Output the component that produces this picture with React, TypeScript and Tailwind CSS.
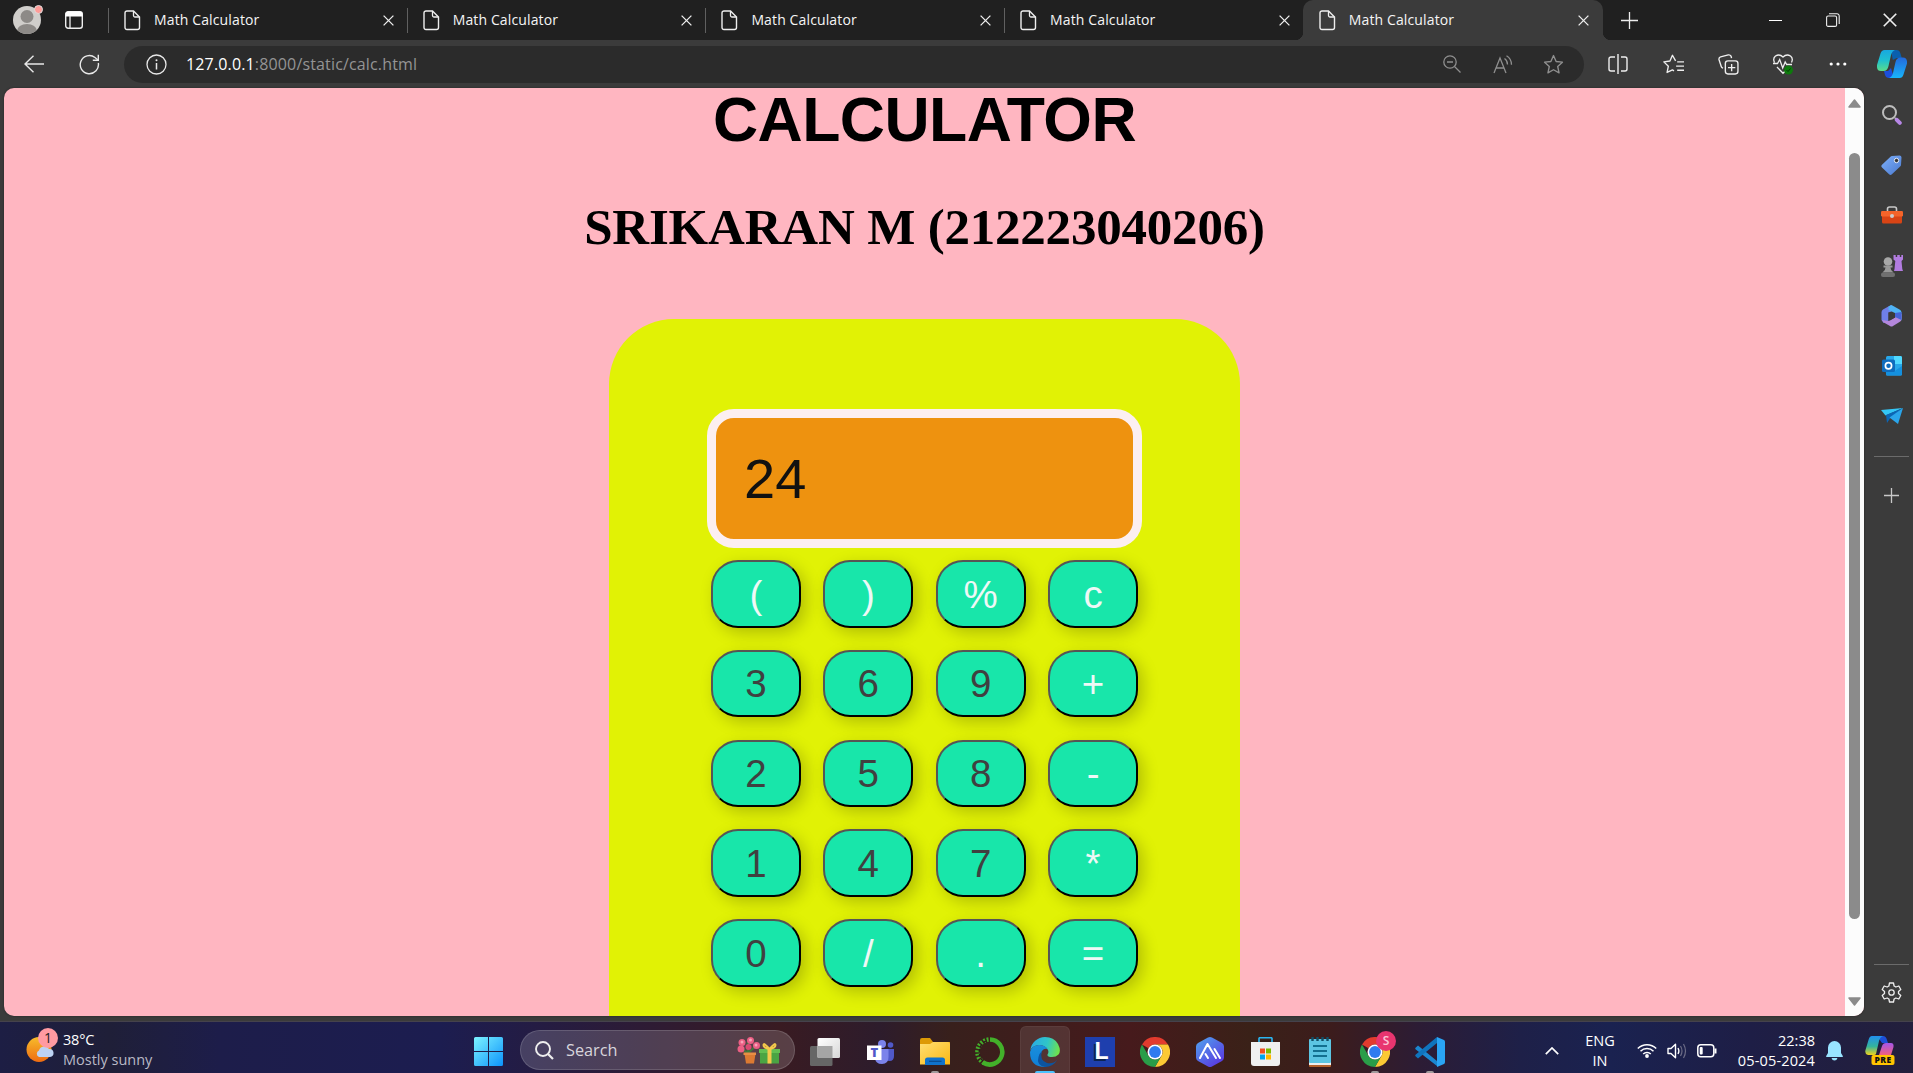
import React from "react";

const UI = "font-['Open_Sans','Noto_Sans',sans-serif]";

type SvgProps = { w: number; h?: number; vb: string; children: React.ReactNode; className?: string };
const Svg = ({ w, h, vb, children, className = "" }: SvgProps) => (
  <svg width={w} height={h ?? w} viewBox={vb} fill="none" className={"shrink-0 block " + className}>
    {children}
  </svg>
);

const Cross = ({ size = 11 }: { size?: number }) => (
  <Svg w={size} vb="0 0 11 11">
    <path d="M.6.6l9.8 9.8M10.4.6L.6 10.4" stroke="#eee" strokeWidth="1.3" />
  </Svg>
);

const PageIcon = () => (
  <Svg w={17} h={21} vb="0 0 17 21">
    <path d="M3 1h6.500l6 6v10.500a2 2 0 0 1-2 2H3a2 2 0 0 1-2-2V3a2 2 0 0 1 2-2z" stroke="#eee" strokeWidth="1.4" />
    <path d="M9.500 1v4.500a1.500 1.500 0 0 0 1.500 1.500h4.500" stroke="#eee" strokeWidth="1.3" />
  </Svg>
);

const Tab = ({ active = false }: { active?: boolean }) => (
  <div
    className={
      active
        ? "relative flex h-10 w-[300px] items-center rounded-t-[10px] bg-[#3b3b3b] pl-4 pr-[14px]"
        : "relative flex h-10 w-[298.700px] items-center pl-4 pr-[13px]"
    }
  >
    {!active && <span className="absolute left-0 top-2 h-[25px] w-px bg-[#606060]" />}
    {active && (
      <>
        <span className="absolute -left-2 bottom-0 size-2 bg-[radial-gradient(circle_at_0_0,#202020_8px,#3b3b3b_8.500px)]" />
        <span className="absolute -right-2 bottom-0 size-2 bg-[radial-gradient(circle_at_100%_0,#202020_8px,#3b3b3b_8.500px)]" />
      </>
    )}
    <PageIcon />
    <span className="ml-[13px] flex-1 whitespace-nowrap text-[14px] leading-10 tracking-[0.13px] text-[#f5f5f5]">Math Calculator</span>
    <Cross />
  </div>
);

const TabStrip = () => (
  <div className="flex h-10 shrink-0 bg-[#202020]">
    <div className="flex w-[108px] items-center pl-[13px]">
      <div className="relative">
        <Svg w={28} vb="0 0 28 28">
          <clipPath id="av"><circle cx="14" cy="14" r="14" /></clipPath>
          <g clipPath="url(#av)">
            <rect width="28" height="28" fill="#d0cecb" />
            <circle cx="14" cy="10.500" r="6.500" fill="#8d8a87" />
            <ellipse cx="14" cy="25" rx="10" ry="7" fill="#8d8a87" />
          </g>
        </Svg>
        <span className="absolute -right-[2px] -top-[1px] size-[9px] rounded-full border border-[#ddd] bg-[#ff9c98]" />
      </div>
      <Svg w={18} vb="0 0 18 18" className="ml-6">
        <rect x=".7" y=".7" width="16.600" height="16.600" rx="2.500" stroke="#eee" strokeWidth="1.400" />
        <path d="M.5 5.500V3A2.500 2.500 0 0 1 3 .5h12A2.500 2.500 0 0 1 17.500 3v2.500z" fill="#fff" />
        <path d="M5 5v12" stroke="#eee" strokeWidth="1.300" />
      </Svg>
    </div>
    <Tab /><Tab /><Tab /><Tab /><Tab active />
    <div className="flex flex-1 items-center pl-[18px]">
      <Svg w={17} vb="0 0 17 17"><path d="M8.500 0v17M0 8.500h17" stroke="#eee" strokeWidth="1.300" /></Svg>
    </div>
    <div className="flex w-[166px] items-center justify-between pl-[22px] pr-[16px]">
      <Svg w={13} vb="0 0 13 13"><path d="M0 6.500h13" stroke="#fff" /></Svg>
      <Svg w={14} vb="0 0 14 14">
        <rect x=".6" y="3" width="10" height="10.400" rx="1.500" stroke="#eee" strokeWidth="1.100" />
        <path d="M3 .8h8a2.200 2.200 0 0 1 2.200 2.200v8" stroke="#eee" strokeWidth="1.100" />
      </Svg>
      <Cross size={14} />
    </div>
  </div>
);

const Cell = ({ w, children }: { w: string; children: React.ReactNode }) => (
  <div className={"flex shrink-0 items-center justify-center " + w}>{children}</div>
);

const STAR = "M10 1.500l2.500 5.600 6 .7-4.500 4.100 1.300 6.100L10 15l-5.300 3 1.300-6.100L1.500 7.800l6-.7z";

const Toolbar = () => (
  <div className="flex h-12 shrink-0 items-center bg-[#3b3b3b]">
    <Cell w="w-[68px]">
      <Svg w={20} h={18} vb="0 0 20 18"><path d="M20 9H1M9.500.7L1 9l8.500 8.300" stroke="#e8e8e8" strokeWidth="1.400" /></Svg>
    </Cell>
    <Cell w="w-[42px]">
      <Svg w={21} vb="0 0 21 21">
        <path d="M19.300 9A9.100 9.100 0 1 1 16 3.500l3 2.500" stroke="#e8e8e8" strokeWidth="1.400" />
        <path d="M19.300.8v5.400h-5.500" stroke="#e8e8e8" strokeWidth="1.400" />
      </Svg>
    </Cell>
    <div className="ml-[14px] flex h-[37px] w-[1460px] shrink-0 items-center rounded-full bg-[#2b2b2b] pl-[22px]">
      <Svg w={21} vb="0 0 21 21">
        <circle cx="10.500" cy="10.500" r="9.500" stroke="#e8e8e8" strokeWidth="1.300" />
        <path d="M10.500 9v6.500" stroke="#e8e8e8" strokeWidth="1.500" /><circle cx="10.500" cy="6.300" r="1" fill="#e8e8e8" />
      </Svg>
      <span className="ml-[19px] flex-1 whitespace-nowrap text-[16px] leading-[36px] tracking-[0.15px] text-[#949494]">
        <span className="text-white">127.0.0.1</span>:8000/static/calc.html
      </span>
      <Cell w="w-[50px]">
        <Svg w={18} vb="0 0 18 18">
          <circle cx="7" cy="7" r="6.200" stroke="#8f8f8f" strokeWidth="1.300" /><path d="M4 7h6M11.500 11.500l6 6" stroke="#8f8f8f" strokeWidth="1.300" />
        </Svg>
      </Cell>
      <Cell w="w-[52px]">
        <Svg w={20} h={19} vb="0 0 20 19">
          <path d="M1 18L7 3l6 15M3.200 13h7.700M11.500 3.500q3 2 3 6M13.500.8q5 3 5 9" stroke="#8f8f8f" strokeWidth="1.300" />
        </Svg>
      </Cell>
      <Cell w="w-[49px]"><Svg w={21} vb="0 0 20 20"><path d={STAR} stroke="#8f8f8f" strokeWidth="1.300" strokeLinejoin="round" /></Svg></Cell>
      <div className="w-[6px]" />
    </div>
    <div className="w-[6px]" />
    <Cell w="w-[55px]">
      <Svg w={20} vb="0 0 20 20">
        <path d="M7 3H3a2 2 0 0 0-2 2v10a2 2 0 0 0 2 2h4M13 3h4a2 2 0 0 1 2 2v10a2 2 0 0 1-2 2h-4M10 0v20" stroke="#eee" strokeWidth="1.400" />
      </Svg>
    </Cell>
    <Cell w="w-[56px]">
      <Svg w={21} vb="0 0 20 20">
        <path d="M12 6.500L9 1.200 6.600 6.700l-5.800.8 4.300 4.100-1.200 6L9 15.200l1.500.8M13.500 7.500H20M12.500 11.500H20M13.500 15.500H20" stroke="#eee" strokeWidth="1.300" strokeLinejoin="round" />
      </Svg>
    </Cell>
    <Cell w="w-[54px]">
      <Svg w={21} vb="0 0 20 20">
        <rect x="7" y="6.500" width="12" height="12.500" rx="2.500" stroke="#eee" strokeWidth="1.300" />
        <path d="M13 9.500v7M9.500 13h7M4.800 13.500a2.500 2.500 0 0 1-1.800-1.800L1 5.500a2.300 2.300 0 0 1 1.500-2.700L9.800.9a2.300 2.300 0 0 1 2.800 1.700l.3 1.300" stroke="#eee" strokeWidth="1.300" />
      </Svg>
    </Cell>
    <Cell w="w-[55px]">
      <Svg w={22} vb="0 0 22 22">
        <path d="M2.500 9.500Q.5 5.500 3.500 3 7.500.5 11 4q3.500-3.500 7.500-1 3 2.500 1 6.500M5 14l6 6.300 2-2M1 10.500h4.500l2.200-4 3 8.500 2.500-6 1.500 2.500H20" stroke="#eee" strokeWidth="1.300" />
        <circle cx="16.500" cy="17" r="4.500" fill="#0e7a0d" /><path d="M14.500 17l1.500 1.500 2.500-3" stroke="#043b04" />
      </Svg>
    </Cell>
    <Cell w="w-[55px]">
      <Svg w={18} h={4} vb="0 0 18 4"><circle cx="2.200" cy="2" r="1.600" fill="#fff" /><circle cx="9" cy="2" r="1.600" fill="#fff" /><circle cx="15.800" cy="2" r="1.600" fill="#fff" /></Svg>
    </Cell>
    <div className="flex flex-1 items-center pl-[12px]">
      <Svg w={30} h={28} vb="0 0 30 28">
        <defs>
          <linearGradient id="cp1" x1="0" y1="0" x2="0" y2="1"><stop stopColor="#18a8e0" /><stop offset=".5" stopColor="#1fc0cf" /><stop offset="1" stopColor="#5bdd8a" /></linearGradient>
          <linearGradient id="cp2" x1="0" y1="0" x2="0" y2="1"><stop stopColor="#2469dc" /><stop offset="1" stopColor="#18b5fb" /></linearGradient>
        </defs>
        <path d="M14 0h5.500a4 4 0 0 1 3.800 3l1.500 5h-5l-4 2z" fill="#0a5fae" />
        <path d="M7.500 0H18q-3 1-4 5l-2.500 11q-1 5-5 5H4q-4.500 0-4-6L3.500 3.500Q4.500 0 7.500 0z" fill="url(#cp1)" />
        <path d="M7 21h4l3-3 3 10h-5q-3 0-4-3z" fill="#1c4fdc" />
        <path d="M22.500 28H12q3-1 4-5l2.500-11q1-4.500 5-4.500H26q4.500 0 4 6l-3.500 11Q25.500 28 22.500 28z" fill="url(#cp2)" />
      </Svg>
    </div>
  </div>
);

const KEYS = ["(", ")", "%", "c", "3", "6", "9", "+", "2", "5", "8", "-", "1", "4", "7", "*", "0", "/", ".", "="];

const Calculator = () => (
  <div className="mt-[57px] flex h-[760px] w-[631px] shrink-0 flex-col items-center rounded-[65px] bg-[#e1f205] pt-[90px]">
    <div className="flex h-[139px] w-[435px] shrink-0 items-center rounded-[27px] border-[9px] border-[#fceff0] bg-[#ee920f] pl-[28px] text-[56px] leading-none text-[#111]">
      24
    </div>
    <div className="mt-3 grid grid-cols-[repeat(4,90px)] gap-x-[22.400px] gap-y-[22.300px]">
      {KEYS.map((k) => (
        <button
          key={k}
          className={
            "flex h-[67.500px] w-[90px] items-center justify-center rounded-[27px] border-2 border-b-black border-l-[#555] border-r-black border-t-[#555] bg-[#18e6aa] pt-[2px] text-[38.500px] leading-none shadow-[5px_5px_16px_rgba(0,0,0,0.21)] " +
            (/[0-9]/.test(k) ? "text-[#404040]" : "text-[#eef8f6]")
          }
        >
          {k}
        </button>
      ))}
    </div>
  </div>
);

const Page = () => (
  <div className="flex h-[928px] w-[1860px] shrink-0 overflow-hidden rounded-[10px] bg-[#ffb6c1] shadow-[0_0_2px_#222]">
    <div className="flex w-[1841px] flex-col items-center overflow-hidden font-['Liberation_Sans',Arial,sans-serif] text-black">
      <h1 className="shrink-0 whitespace-nowrap text-[62.500px] font-bold leading-[62px] tracking-[-0.5px]">CALCULATOR</h1>
      <h2 className="mt-[43px] shrink-0 whitespace-nowrap font-['Liberation_Serif',serif] text-[51px] font-bold leading-[69px] tracking-[-0.2px]">SRIKARAN M (212223040206)</h2>
      <Calculator />
    </div>
    <div className="flex w-[19px] flex-col items-center bg-[#fcfcfc] pt-[11px]">
      <Svg w={13} h={9} vb="0 0 13 9"><path d="M6.500 1L12 8H1z" fill="#8b8b8b" stroke="#8b8b8b" strokeWidth="1.500" strokeLinejoin="round" /></Svg>
      <div className="mt-[45px] h-[766px] w-[11px] shrink-0 rounded-full bg-[#8b8b8b]" />
      <Svg w={13} h={9} vb="0 0 13 9" className="mt-[78px]"><path d="M6.500 8L12 1H1z" fill="#8b8b8b" stroke="#8b8b8b" strokeWidth="1.500" strokeLinejoin="round" /></Svg>
    </div>
  </div>
);

const SideCell = ({ children }: { children: React.ReactNode }) => (
  <div className="flex h-[50.200px] shrink-0 items-center justify-center">{children}</div>
);

const Sidebar = () => (
  <div className="flex flex-1 flex-col pl-[6px] pt-[2px]">
    <SideCell>
      <Svg w={20} vb="0 0 20 20"><path d="M13 13l1.500 1.500" stroke="#bdbdbd" strokeWidth="2" /><path d="M14.800 14.800l3 3" stroke="#b787e6" strokeWidth="4" strokeLinecap="round" /><circle cx="7.500" cy="7.500" r="6.500" stroke="#bdbdbd" strokeWidth="2" /></Svg>
    </SideCell>
    <SideCell>
      <Svg w={21} vb="0 0 21 21">
        <defs><linearGradient id="tg" x1="0" y1="0" x2="1" y2="1"><stop stopColor="#7eb0fa" /><stop offset="1" stopColor="#4a79cf" /></linearGradient></defs>
        <path d="M11 1l7.500-.5a2 2 0 0 1 2 2L20 10a2 2 0 0 1-.6 1.300l-8.500 8a2 2 0 0 1-2.800 0L1 12.500a2 2 0 0 1 0-2.800l8.500-8A2 2 0 0 1 11 1z" fill="url(#tg)" />
        <circle cx="15.500" cy="5.500" r="2.200" fill="#333" stroke="#e7eefc" />
      </Svg>
    </SideCell>
    <SideCell>
      <Svg w={22} h={18} vb="0 0 22 18">
        <path d="M6.500 5V3A2 2 0 0 1 8.500 1h5a2 2 0 0 1 2 2v2" stroke="#c9c9c9" strokeWidth="1.600" />
        <rect x="1" y="8" width="20" height="9.500" rx="1.500" fill="#d84415" /><rect y="5" width="22" height="5.500" rx="1.200" fill="#f4642a" />
        <circle cx="11" cy="10" r="2" fill="#ccc" />
      </Svg>
    </SideCell>
    <SideCell>
      <Svg w={22} vb="0 0 22 22">
        <path d="M12.500 0h2.200v2h1.500V0h2.600v2h1.500V0H22v4.500l-1.500 1.500.8 8 .7 2h-9l.5-2 .8-8-1.800-1.500z" fill="#b27ce0" />
        <circle cx="7" cy="6.500" r="4.300" fill="#a8a8a8" /><path d="M2.500 10.500h9v2h-2q0 3 3 5h-11q3-2 3-5h-2z" fill="#999" /><rect y="17.500" width="14" height="4.500" rx="2" fill="#707070" />
      </Svg>
    </SideCell>
    <SideCell>
      <Svg w={21} h={22} vb="0 0 21 22">
        <path d="M10 0L2 4.500Q.5 5.500.5 7.500v7.500l2 3 5-2.500V8L12 5.500z" fill="#6f7fe8" />
        <path d="M7.500 1.500L10.500 0l8 4.500q2 1 2 3v8L14 12V8L7.500 5z" fill="#4fb3f5" />
        <path d="M.8 15l2 2.500L9 21q1.500 1 3 0l6.500-4q2-1 2-4V9L14 12.500 7.500 16z" fill="#b487dc" />
        <path d="M14 8l6.500-1v8L14 12z" fill="#4664d8" />
        <path d="M7.500 7l6.500 1.500v4L9 15.500l-1.500-.5z" fill="#3b3b3b" />
      </Svg>
    </SideCell>
    <SideCell>
      <Svg w={20} vb="0 0 20 20">
        <rect x="4" width="16" height="19.500" rx="1.500" fill="#28a8ea" /><path d="M12 0h6.500A1.500 1.500 0 0 1 20 1.500V8h-8z" fill="#50d9ff" />
        <path d="M3 12l9 3.500L20 10v8a1.500 1.500 0 0 1-1.500 1.500h-14z" fill="#1490df" /><rect y="3.500" width="13" height="12.500" rx="1.500" fill="#0f6cbd" />
        <circle cx="6.500" cy="9.700" r="3.100" stroke="#fff" strokeWidth="1.700" />
      </Svg>
    </SideCell>
    <SideCell>
      <Svg w={22} h={16} vb="0 0 22 16"><path d="M0 2L22 0 4.500 7.500z" fill="#34c7f6" /><path d="M22 0L5 7l1 8 3-4.500z" fill="#0b66b5" /><path d="M22 0L8.500 9.500 17 16z" fill="#2aa5ea" /></Svg>
    </SideCell>
    <div className="ml-1 mt-[15px] h-px w-[35px] shrink-0 bg-[#6b6b6b]" />
    <div className="mt-[31px] flex justify-center">
      <Svg w={15} vb="0 0 15 15"><path d="M7.500 0v15M0 7.500h15" stroke="#c8c8c8" strokeWidth="1.300" /></Svg>
    </div>
    <div className="ml-1 mt-auto h-px w-[35px] shrink-0 bg-[#6b6b6b]" />
    <div className="mb-[18px] mt-[17px] flex justify-center">
      <Svg w={21} vb="0 0 21 21">
        <path d="M8.500 1h4l.6 3 1.800 1 2.900-1 2 3.500-2.300 2v2l2.300 2-2 3.500-2.900-1-1.800 1-.6 3h-4l-.6-3-1.800-1-2.900 1-2-3.500 2.300-2v-2l-2.300-2 2-3.500 2.900 1 1.800-1z" stroke="#eee" strokeWidth="1.300" strokeLinejoin="round" />
        <circle cx="10.500" cy="10.500" r="2.700" stroke="#eee" strokeWidth="1.300" />
      </Svg>
    </div>
  </div>
);

const ChromeIcon = () => (
  <Svg w={30} vb="0 0 30 30">
    <path d="M2 7.500A15 15 0 0 1 28 7.500H15a7.500 7.500 0 0 0-6.500 3.700z" fill="#e33b2e" />
    <path d="M28 7.500A15 15 0 0 1 15 30l6.500-11.200A7.500 7.500 0 0 0 15 7.500z" fill="#fcc934" />
    <path d="M2 7.500A15 15 0 0 0 15 30l6.500-11.300a7.500 7.500 0 0 1-13 0z" fill="#2a9d48" />
    <circle cx="15" cy="15" r="7.500" fill="#fff" /><circle cx="15" cy="15" r="5.900" fill="#2f7bef" />
  </Svg>
);

const App55 = ({ children, run = "", active = false }: { children: React.ReactNode; run?: string; active?: boolean }) => (
  <div className="relative flex h-[52px] w-[55px] shrink-0 items-center justify-center pt-[7px]">
    {active && <span className="absolute inset-x-[2.500px] bottom-0 top-1 rounded-t-[6px] border border-b-0 border-white/5 bg-white/10" />}
    <div className="relative">{children}</div>
    {run && <span className={"absolute bottom-0 h-[3px] rounded-t-[2px] " + run} />}
  </div>
);
const DOT = "w-2 bg-[#a09a9c]";

const Taskbar = () => (
  <div className="flex h-[52px] shrink-0 border-t border-[#45424c] bg-[linear-gradient(90deg,#1d1e44_0px,#1f1f38_110px,#1d1d4a_220px,#1c1d50_440px,#2d1b35_640px,#391b22_780px,#2d1c2c_880px,#38201c_950px,#461a1c_1130px,#3a2118_1250px,#3c1c1c_1330px,#2c1c35_1420px,#1e2048_1520px,#1a2250_1610px,#1e1e46_1750px,#231f3c_1913px)]">
    <div className="flex w-[461px] pl-[26px] pt-[6px]">
      <div className="relative">
        <Svg w={32} h={36} vb="0 0 32 36">
          <defs><linearGradient id="sun" x1="0" y1="0" x2="0" y2="1"><stop stopColor="#f7bd2b" /><stop offset="1" stopColor="#ee6b12" /></linearGradient></defs>
          <circle cx="13" cy="21.500" r="12.500" fill="url(#sun)" />
          <path d="M13 29a3.500 3.500 0 0 1 0-6.500 5.500 5.500 0 0 1 10-1.500 4 4 0 0 1 1 8z" fill="#bdd3f3" />
        </Svg>
        <span className="absolute left-[12px] top-0 flex size-5 items-center justify-center rounded-full bg-[#ff9aa2] text-[14px] leading-none text-[#222]">1</span>
      </div>
      <div className="ml-[5px] mt-[2px] whitespace-nowrap text-[14.500px] leading-5">
        <div className="tracking-[-0.2px] text-white">38°C</div>
        <div className="text-[#b9b9c6]">Mostly sunny</div>
      </div>
    </div>
    <App55>
      <Svg w={29} vb="0 0 29 29">
        <defs><linearGradient id="win" x1="0" y1="0" x2="1" y2="1"><stop stopColor="#7df3ff" /><stop offset="1" stopColor="#0c93fb" /></linearGradient></defs>
        <path d="M0 1.500A1.500 1.500 0 0 1 1.500 0H14v14H0zM15 0h12.500A1.500 1.500 0 0 1 29 1.500V14H15zM0 15h14v14H1.500A1.500 1.500 0 0 1 0 27.500zM15 15h14v12.500a1.500 1.500 0 0 1-1.500 1.500H15z" fill="url(#win)" />
      </Svg>
    </App55>
    <div className="ml-1 mr-[2.500px] mt-2 flex h-10 w-[275px] shrink-0 items-center rounded-full border border-white/15 bg-white/[0.16] pl-[14px] pr-[14px]">
      <Svg w={19} vb="0 0 19 19"><circle cx="8" cy="8" r="7" stroke="#eee" strokeWidth="1.900" /><path d="M13 13l5 5" stroke="#eee" strokeWidth="2.200" /></Svg>
      <span className="ml-[12px] flex-1 text-[16.300px] leading-none text-[#d8d5dc]">Search</span>
      <Svg w={43} h={27} vb="0 0 43 27">
        <path d="M11 5v12M5 12l6 4 8-7" stroke="#3f7a3c" strokeWidth="2" />
        <circle cx="5" cy="5.500" r="3.500" fill="#ec5f85" /><circle cx="13.500" cy="3.500" r="3.500" fill="#ec5f85" /><circle cx="4" cy="12" r="3.500" fill="#ec5f85" /><circle cx="19.500" cy="8.500" r="3.500" fill="#ec5f85" /><circle cx="11.500" cy="10" r="3" fill="#d94a72" />
        <circle cx="5" cy="5" r="1.500" fill="#f9a3b8" /><circle cx="13.500" cy="3" r="1.500" fill="#f9a3b8" /><circle cx="19" cy="8" r="1.500" fill="#f9a3b8" />
        <path d="M7.500 17l1.500 9.500h8L18.500 17z" fill="#dc7a32" /><rect x="6.500" y="15.500" width="12.500" height="2.500" fill="#e98e45" />
        <rect x="23" y="14" width="19" height="12.500" fill="#4aa443" /><rect x="22" y="12" width="21" height="4" fill="#62bf52" /><rect x="30.500" y="12" width="4" height="14.500" fill="#f3c94b" />
        <path d="M32.500 12q-6-1-6-4t6 4q6-7 6-4t-6 4" stroke="#f3c94b" strokeWidth="2" />
      </Svg>
    </div>
    <App55>
      <Svg w={30} h={28} vb="0 0 30 28">
        <defs><linearGradient id="tv" x1="0" y1="0" x2="1" y2="1"><stop stopColor="#fff" /><stop offset="1" stopColor="#d7d7d7" /></linearGradient></defs>
        <rect y="8" width="22.500" height="20" rx="1.500" fill="#666" /><rect x="7.500" width="22.500" height="20" rx="1.500" fill="url(#tv)" /><path d="M7.500 8h15v12h-14a1 1 0 0 1-1-1z" fill="#a5a5a5" />
      </Svg>
    </App55>
    <App55>
      <Svg w={27} h={24} vb="0 0 27 24">
        <circle cx="15" cy="4" r="4" fill="#7b83eb" /><circle cx="23.500" cy="5" r="2.800" fill="#5059c9" /><path d="M17 9h10v7q0 5-4.500 5-4 0-5.500-3z" fill="#5059c9" /><path d="M8 9h13.500v8q0 7-6.500 7t-7-6z" fill="#7b83eb" />
        <rect y="5.500" width="14.500" height="14.500" fill="#fff" /><text x="7.300" y="17.300" textAnchor="middle" fontSize="13" fontWeight="800" fill="#5059c9">T</text>
      </Svg>
    </App55>
    <App55 run={DOT}>
      <Svg w={30} h={27} vb="0 0 30 27">
        <defs><linearGradient id="fd" x1="0" y1="0" x2="1" y2="1"><stop stopColor="#ffdf73" /><stop offset="1" stopColor="#fbb812" /></linearGradient></defs>
        <path d="M0 2a2 2 0 0 1 2-2h8l3 4H30v5H0z" fill="#dd9a06" /><path d="M0 6h10l3-2h15a2 2 0 0 1 2 2v20.500H0z" fill="url(#fd)" />
        <path d="M5 27v-5a2.500 2.500 0 0 1 2.500-2.500h15A2.500 2.500 0 0 1 25 22v5z" fill="#0f73cc" /><path d="M9 23.300h12.500" stroke="#0a4a8e" strokeWidth="1.200" />
      </Svg>
    </App55>
    <App55>
      <Svg w={30} vb="0 0 30 30">
        <path d="M15 2.500a12.500 12.500 0 1 1-7 23" stroke="#43b02a" strokeWidth="4.600" /><path d="M9 26A12.500 12.500 0 0 1 15 2.500" stroke="#43b02a" strokeWidth="4.500" strokeDasharray="1.800 1.500" /><path d="M8 24A12.500 12.500 0 0 1 12 3.500" stroke="#2c1c1a" strokeWidth="1.300" strokeDasharray="3 2" />
      </Svg>
    </App55>
    <App55 active run="w-5 bg-[#4cc2ff]">
      <Svg w={30} vb="0 0 30 30">
        <defs>
          <linearGradient id="e1" x1="0" y1=".3" x2="1" y2=".5"><stop stopColor="#2aa9e6" /><stop offset=".55" stopColor="#2fc5c8" /><stop offset="1" stopColor="#6fe34c" /></linearGradient>
          <linearGradient id="e2" x1="0" y1="0" x2="0" y2="1"><stop stopColor="#1a8fdb" /><stop offset="1" stopColor="#0f7fd8" /></linearGradient>
        </defs>
        <path d="M.3 13A15 15 0 0 1 15 0q9 0 13 7 3.500 7 .5 10.500Q26 20 22 20q-5 0-4.500-2.500 1.500-2 .5-4.500Q15 8 9 8 3 8.500.3 13z" fill="url(#e1)" />
        <path d="M0 15Q2 8 9 8q6 0 8.500 4-4-1-6 3-2.500 6 2.500 11 4 4 1 4Q0 30 0 15z" fill="url(#e2)" />
        <path d="M12 14q-3 9 5 12 6 1.500 10.500-3.500Q23 30 15 30 6 28 8.500 20q1-4 3.500-6z" fill="#0d549f" />
      </Svg>
    </App55>
    <App55>
      <div className="flex size-[30px] items-center justify-center bg-[#1e3fae] pl-[3px] font-['Liberation_Sans',Arial,sans-serif] text-[23px] font-bold leading-none text-white [text-shadow:-2px_2px_0_#0d2452]">L</div>
    </App55>
    <App55><ChromeIcon /></App55>
    <App55>
      <Svg w={28} h={30} vb="0 0 28 30">
        <defs><linearGradient id="hx" x1="0" y1="0" x2=".8" y2="1"><stop stopColor="#4fa6ee" /><stop offset="1" stopColor="#5a36e0" /></linearGradient></defs>
        <path d="M12 .6a4 4 0 0 1 4 0l10 5.400a4 4 0 0 1 2 3.500v11a4 4 0 0 1-2 3.500l-10 5.400a4 4 0 0 1-4 0L2 24a4 4 0 0 1-2-3.500v-11A4 4 0 0 1 2 6z" fill="url(#hx)" />
        <path d="M4 21L11.500 7 20 21M12 21l-2.500-4M18.500 12l5.500 9" stroke="#fff" strokeWidth="2" strokeLinecap="round" strokeLinejoin="round" />
      </Svg>
    </App55>
    <App55>
      <Svg w={29} vb="0 0 29 29">
        <path d="M8 6V1.500A1 1 0 0 1 9 .7h11a1 1 0 0 1 1 .8V6" stroke="#2bb5f0" strokeWidth="1.600" /><path d="M0 5h29v21a3 3 0 0 1-3 3H3a3 3 0 0 1-3-3z" fill="#f0f0f0" />
        <path d="M9 11.500h5v5H9z" fill="#f25022" /><path d="M15 11.500h5v5h-5z" fill="#7fba00" /><path d="M9 17.500h5v5H9z" fill="#00a4ef" /><path d="M15 17.500h5v5h-5z" fill="#ffb900" />
      </Svg>
    </App55>
    <App55>
      <Svg w={22} h={30} vb="0 0 22 30">
        <rect y="26" width="22" height="4" rx="1" fill="#b5622c" /><rect y="24" width="22" height="4" fill="#eee" /><rect y="2" width="22" height="24" rx="1" fill="#5cc5e2" />
        <path d="M3.500 0v4M8.500 0v4M13.500 0v4M18.500 0v4" stroke="#114f66" strokeWidth="2.400" /><path d="M4 9h14M4 14h14M4 19h14" stroke="#13708f" strokeWidth="1.800" />
      </Svg>
    </App55>
    <App55 run={DOT}>
      <ChromeIcon />
      <span className="absolute -right-[6px] -top-[6px] flex size-5 items-center justify-center rounded-full bg-[#e8356f] text-[12px] font-semibold leading-none text-[#fbc4d6]">S</span>
    </App55>
    <App55 run={DOT}>
      <Svg w={30} vb="0 0 30 30">
        <path d="M3 8.500L22 24v5L.8 12.500a1.300 1.300 0 0 1 0-2z" fill="#1b86cf" /><path d="M3 21.500L22 6V0L.8 17.500a1.300 1.300 0 0 0 0 2z" fill="#0f74bd" /><path d="M22 0l7 3q1 .5 1 2v20q0 1.500-1 2l-7 3z" fill="#2aa4f4" />
      </Svg>
    </App55>
    <div className="flex-1" />
    <div className="flex w-[373px] shrink-0 items-center whitespace-nowrap pt-[6px] text-[14.500px] leading-5 text-white">
      <Cell w="w-[24px]"><Svg w={14} h={8} vb="0 0 14 8"><path d="M.8 7.200L7 1l6.200 6.200" stroke="#fff" strokeWidth="1.700" /></Svg></Cell>
      <Cell w="w-[72px]"><div className="text-center">ENG<br />IN</div></Cell>
      <Cell w="w-[22px]">
        <Svg w={20} h={15} vb="0 0 20 15"><path d="M.8 5.500a13 13 0 0 1 18.400 0M3.500 8.300a9.200 9.200 0 0 1 13 0M6.200 11a5.400 5.400 0 0 1 7.600 0" stroke="#fff" strokeWidth="1.500" /><circle cx="10" cy="13" r="1.900" fill="#fff" /></Svg>
      </Cell>
      <Cell w="w-[38px]">
        <Svg w={20} h={16} vb="0 0 20 16"><path d="M1 5.500h3L8.500 1.200v13.600L4 10.500H1z" stroke="#fff" strokeWidth="1.400" strokeLinejoin="round" /><path d="M11 5q1.800 3 0 6" stroke="#fff" strokeWidth="1.300" /><path d="M13.500 3q3 5 0 10M16.500 1q4 7 0 14" stroke="#6c6c86" strokeWidth="1.200" /></Svg>
      </Cell>
      <Cell w="w-[22px]">
        <Svg w={20} h={14} vb="0 0 20 14"><rect x=".8" y=".8" width="16" height="12" rx="3" stroke="#fff" strokeWidth="1.500" /><rect x="2.700" y="3" width="3" height="7.600" rx="1" fill="#fff" /><path d="M18.500 4.500v5" stroke="#fff" strokeWidth="2" /></Svg>
      </Cell>
      <div className="w-[97px] text-right">22:38<br /><span className="tracking-[0.15px]">05-05-2024</span></div>
      <Cell w="w-[38px]">
        <Svg w={17} h={20} vb="0 0 17 20"><path d="M8.500 0a6.500 6.500 0 0 1 6.500 6.500V12l1.800 3q.3 1-.8 1H1q-1.100 0-.8-1L2 12V6.500A6.500 6.500 0 0 1 8.500 0zM5.500 17h6q-.7 2.500-3 2.500t-3-2.500z" fill="#99e4ff" /></Svg>
      </Cell>
      <div className="ml-[12px]">
        <Svg w={30} h={29} vb="0 0 30 29">
          <defs>
            <linearGradient id="p1" x1="0" y1="0" x2="0" y2="1"><stop stopColor="#2190f0" /><stop offset=".55" stopColor="#34b49c" /><stop offset="1" stopColor="#f0d21c" /></linearGradient>
            <linearGradient id="p2" x1="0" y1="0" x2="0" y2="1"><stop stopColor="#a455ea" /><stop offset="1" stopColor="#f2607c" /></linearGradient>
          </defs>
          <path d="M12 0h6q3 0 4 4l1 3h-6z" fill="#1d4fd8" /><path d="M7 0h11q-3 1-4 5l-3 13q-.5 1-2 1H3q-3.500-1-2.500-5L3.500 4Q4.500 0 7 0z" fill="url(#p1)" />
          <path d="M21 7h5q3 0 2.500 4l-2.500 8H14l3-9q1-3 4-3z" fill="url(#p2)" />
          <rect x="6.500" y="19" width="23" height="10" rx="2" fill="#ffc400" /><text x="18" y="27.200" textAnchor="middle" fontSize="8.500" fontWeight="800" letterSpacing=".4" fill="#111">PRE</text>
        </Svg>
      </div>
    </div>
  </div>
);

export default function App() {
  return (
    <div className={"flex h-[1073px] w-[1913px] flex-col overflow-hidden bg-[#3b3b3b] " + UI}>
      <TabStrip />
      <Toolbar />
      <div className="flex h-[933px] shrink-0 items-start pl-1">
        <Page />
        <div className="flex h-[933px] flex-1"><Sidebar /></div>
      </div>
      <Taskbar />
    </div>
  );
}
